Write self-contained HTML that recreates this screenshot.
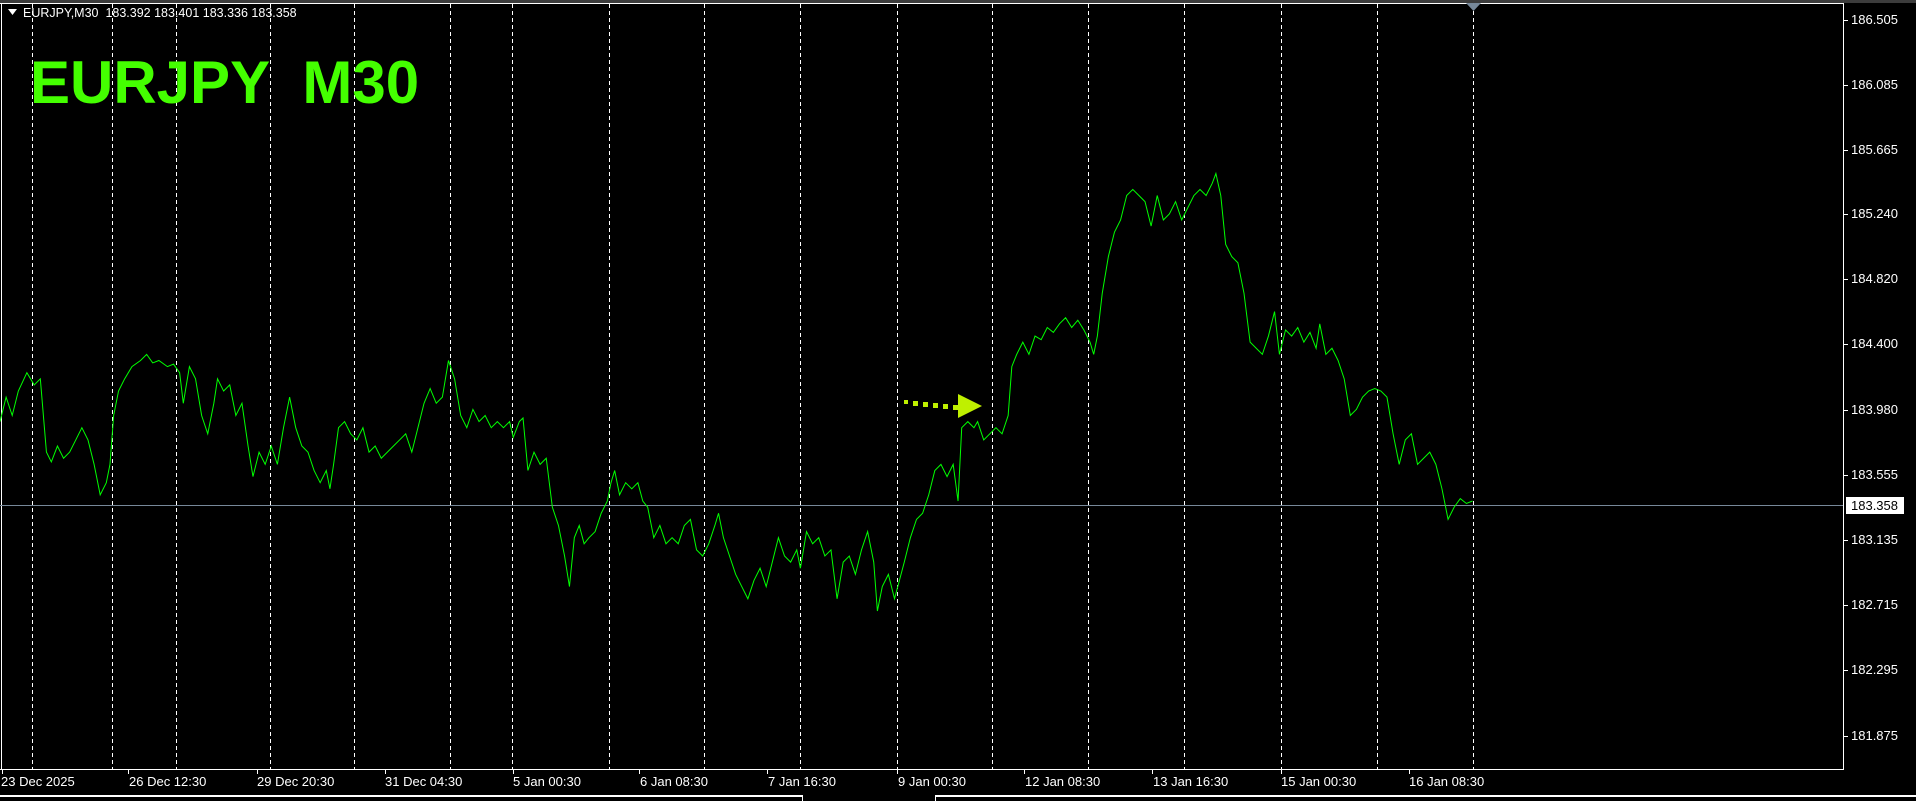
<!DOCTYPE html>
<html><head><meta charset="utf-8"><style>
html,body{margin:0;padding:0;background:#000;}
body{width:1916px;height:801px;position:relative;overflow:hidden;font-family:"Liberation Sans",sans-serif;}
.t{position:absolute;color:#fff;font-size:13px;white-space:nowrap;}
</style></head><body>
<svg width="1916" height="801" style="position:absolute;left:0;top:0" xmlns="http://www.w3.org/2000/svg">
<rect x="0" y="0" width="1916" height="3" fill="#3c3c3c"/>
<line x1="0" y1="3.5" x2="1843" y2="3.5" stroke="#fff" stroke-width="1"/>
<line x1="1.5" y1="3" x2="1.5" y2="769" stroke="#fff"/>
<line x1="1843.5" y1="3" x2="1843.5" y2="769.5" stroke="#fff"/>
<line x1="0" y1="769.5" x2="1844" y2="769.5" stroke="#fff"/>
<g stroke="#fff" stroke-dasharray="4,3" stroke-width="1">
<line x1="32.5" y1="4" x2="32.5" y2="769"/><line x1="112.5" y1="4" x2="112.5" y2="769"/><line x1="176.5" y1="4" x2="176.5" y2="769"/><line x1="270.5" y1="4" x2="270.5" y2="769"/><line x1="354.5" y1="4" x2="354.5" y2="769"/><line x1="450.5" y1="4" x2="450.5" y2="769"/><line x1="512.5" y1="4" x2="512.5" y2="769"/><line x1="609.5" y1="4" x2="609.5" y2="769"/><line x1="704.5" y1="4" x2="704.5" y2="769"/><line x1="800.5" y1="4" x2="800.5" y2="769"/><line x1="897.5" y1="4" x2="897.5" y2="769"/><line x1="992.5" y1="4" x2="992.5" y2="769"/><line x1="1088.5" y1="4" x2="1088.5" y2="769"/><line x1="1184.5" y1="4" x2="1184.5" y2="769"/><line x1="1281.5" y1="4" x2="1281.5" y2="769"/><line x1="1377.5" y1="4" x2="1377.5" y2="769"/><line x1="1473.5" y1="4" x2="1473.5" y2="769"/>
</g>
<polygon points="1466,3 1481,3 1473.5,11" fill="#778899"/>
<line x1="0" y1="505.5" x2="1843" y2="505.5" stroke="#778899"/>
<g stroke="#fff">
<line x1="1844" y1="20.5" x2="1848" y2="20.5"/><line x1="1844" y1="85.5" x2="1848" y2="85.5"/><line x1="1844" y1="150.5" x2="1848" y2="150.5"/><line x1="1844" y1="214.5" x2="1848" y2="214.5"/><line x1="1844" y1="279.5" x2="1848" y2="279.5"/><line x1="1844" y1="344.5" x2="1848" y2="344.5"/><line x1="1844" y1="410.5" x2="1848" y2="410.5"/><line x1="1844" y1="475.5" x2="1848" y2="475.5"/><line x1="1844" y1="540.5" x2="1848" y2="540.5"/><line x1="1844" y1="605.5" x2="1848" y2="605.5"/><line x1="1844" y1="670.5" x2="1848" y2="670.5"/><line x1="1844" y1="736.5" x2="1848" y2="736.5"/>
<line x1="2.5" y1="770" x2="2.5" y2="774"/><line x1="128.5" y1="770" x2="128.5" y2="774"/><line x1="257.5" y1="770" x2="257.5" y2="774"/><line x1="385.5" y1="770" x2="385.5" y2="774"/><line x1="513.5" y1="770" x2="513.5" y2="774"/><line x1="639.5" y1="770" x2="639.5" y2="774"/><line x1="767.5" y1="770" x2="767.5" y2="774"/><line x1="897.5" y1="770" x2="897.5" y2="774"/><line x1="1024.5" y1="770" x2="1024.5" y2="774"/><line x1="1152.5" y1="770" x2="1152.5" y2="774"/><line x1="1281.5" y1="770" x2="1281.5" y2="774"/><line x1="1409.5" y1="770" x2="1409.5" y2="774"/>
</g>
<rect x="1846" y="497" width="58" height="17" fill="#fff"/>
<g transform="scale(1.222)">
<polyline fill="none" stroke="#00ff00" stroke-width="1" vector-effect="non-scaling-stroke" points="0,345 5,325 10,340 15,320 22,305 28,315 33,310 38,370 42,378 47,365 52,375 57,370 62,360 67,350 72,360 77,380 82,405 87,395 90,380 93,340 97,320 102,310 108,300 115,295 120,290 125,297 130,295 137,300 142,298 147,305 150,330 155,300 160,310 165,340 170,355 175,330 178,310 183,320 188,315 193,340 198,330 203,365 207,390 212,370 217,380 222,365 227,380 232,350 237,325 242,350 247,365 252,370 257,385 262,395 267,385 270,400 273,380 277,350 282,345 287,355 292,360 297,350 302,370 307,365 312,375 317,370 322,365 327,360 332,355 337,370 342,350 347,330 352,318 357,330 362,325 367,295 372,310 377,340 382,350 387,335 392,345 397,340 402,350 407,345 412,350 417,345 420,358 425,345 428,342 432,385 437,370 442,380 447,375 452,415 457,430 462,455 466,480 470,440 474,430 478,445 482,440 487,435 492,420 497,410 500,395 503,385 507,405 512,395 517,400 522,395 526,410 530,415 535,440 540,430 545,445 550,440 555,445 560,430 565,425 570,450 575,455 580,445 585,430 588,420 592,440 597,455 602,470 607,480 612,490 617,475 622,465 627,480 632,460 637,440 642,455 647,460 652,450 655,465 660,435 665,445 670,440 675,455 680,450 685,490 690,460 695,455 700,470 705,450 710,435 715,460 718,500 722,480 727,470 732,490 736,475 740,460 745,440 750,425 755,420 760,405 765,385 770,380 775,390 780,380 784,410 787,350 792,345 797,350 800,345 805,360 810,355 815,350 820,355 825,340 828,300 832,290 837,280 842,290 847,275 852,278 857,268 862,272 867,265 872,260 877,268 882,262 887,270 892,280 895,290 898,275 902,240 907,210 912,190 917,180 922,160 927,155 932,160 937,165 942,185 947,160 952,180 957,175 962,165 967,180 972,170 977,160 982,155 987,160 992,150 995,142 999,160 1003,200 1008,210 1013,215 1018,240 1023,280 1028,285 1033,290 1038,275 1043,255 1047,290 1052,270 1057,275 1062,268 1067,280 1072,272 1077,285 1080,265 1085,290 1090,285 1095,295 1100,310 1105,340 1110,335 1115,325 1120,320 1125,318 1130,320 1135,325 1140,355 1145,380 1150,360 1155,355 1160,380 1165,375 1170,370 1175,380 1180,400 1185,425 1190,415 1195,408 1200,412 1205,410"/>
</g>
<g fill="#bff000">
<rect x="904" y="400" width="4" height="4"/><rect x="913" y="401" width="5" height="5"/><rect x="923" y="402" width="5" height="5"/><rect x="933" y="403" width="5" height="5"/><rect x="943" y="404" width="5" height="5"/><rect x="953" y="405" width="5" height="5"/>
<polygon points="958,394 982,406 958,418"/>
</g>
<rect x="0" y="795" width="803" height="2" fill="#fff"/>
<rect x="935" y="795" width="981" height="2" fill="#fff"/>
<rect x="802" y="795" width="1" height="6" fill="#fff"/>
<rect x="935" y="795" width="1" height="6" fill="#fff"/>
</svg>
<svg width="10" height="8" style="position:absolute;left:8px;top:9px"><polygon points="0,0 9,0 4.5,6" fill="#fff"/></svg>
<div class="t" style="left:23px;top:6px;font-size:12.5px">EURJPY,M30&nbsp; 183.392 183.401 183.336 183.358</div>
<div style="position:absolute;left:30px;top:48px;color:#44ff00;font-weight:bold;font-size:60px;line-height:70px;white-space:pre">EURJPY  M30</div>
<div class="t" style="left:1851px;top:12px">186.505</div>
<div class="t" style="left:1851px;top:77px">186.085</div>
<div class="t" style="left:1851px;top:142px">185.665</div>
<div class="t" style="left:1851px;top:206px">185.240</div>
<div class="t" style="left:1851px;top:271px">184.820</div>
<div class="t" style="left:1851px;top:336px">184.400</div>
<div class="t" style="left:1851px;top:402px">183.980</div>
<div class="t" style="left:1851px;top:467px">183.555</div>
<div class="t" style="left:1851px;top:498px;color:#000">183.358</div>
<div class="t" style="left:1851px;top:532px">183.135</div>
<div class="t" style="left:1851px;top:597px">182.715</div>
<div class="t" style="left:1851px;top:662px">182.295</div>
<div class="t" style="left:1851px;top:728px">181.875</div>
<div class="t" style="left:1px;top:774px">23 Dec 2025</div>
<div class="t" style="left:129px;top:774px">26 Dec 12:30</div>
<div class="t" style="left:257px;top:774px">29 Dec 20:30</div>
<div class="t" style="left:385px;top:774px">31 Dec 04:30</div>
<div class="t" style="left:513px;top:774px">5 Jan 00:30</div>
<div class="t" style="left:640px;top:774px">6 Jan 08:30</div>
<div class="t" style="left:768px;top:774px">7 Jan 16:30</div>
<div class="t" style="left:898px;top:774px">9 Jan 00:30</div>
<div class="t" style="left:1025px;top:774px">12 Jan 08:30</div>
<div class="t" style="left:1153px;top:774px">13 Jan 16:30</div>
<div class="t" style="left:1281px;top:774px">15 Jan 00:30</div>
<div class="t" style="left:1409px;top:774px">16 Jan 08:30</div>
</body></html>
